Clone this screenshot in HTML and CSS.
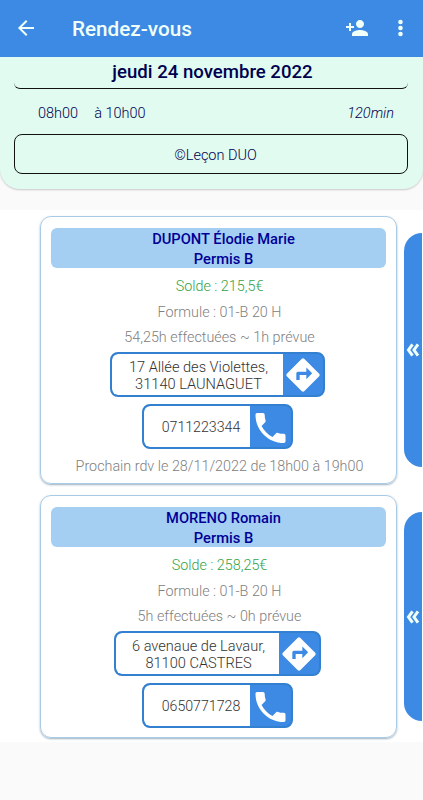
FILE: index.html
```html
<!DOCTYPE html>
<html lang="fr">

<head>
    <meta charset="UTF-8">
    <meta name="viewport" content="width=device-width, initial-scale=1.0">
    <title>Rendez-vous</title>
    <link rel="stylesheet" href="styles.css">
</head>

<body>
    <header class="topbar">
        <svg class="back" viewBox="0 0 24 24"><path d="M20 11H7.83l5.59-5.59L12 4l-8 8 8 8 1.41-1.41L7.83 13H20z"/></svg>
        <h1>Rendez-vous</h1>
        <svg class="add" viewBox="0 0 24 24"><path d="M15 12c2.21 0 4-1.79 4-4s-1.79-4-4-4-4 1.79-4 4 1.79 4 4 4zm-9-2V7H4v3H1v2h3v3h2v-3h3v-2zm9 4c-2.67 0-8 1.34-8 4v2h16v-2c0-2.66-5.33-4-8-4z"/></svg>
        <svg class="more" viewBox="0 0 24 24"><circle cx="12.5" cy="6" r="2.3"/><circle cx="12.5" cy="12" r="2.3"/><circle cx="12.5" cy="18" r="2.3"/></svg>
    </header>

    <!-- résumé du rendez-vous -->
    <section class="summary">
        <div class="date">jeudi 24 novembre 2022</div>
        <div class="hours">
            <span class="start">08h00</span>
            <span>à 10h00</span>
            <span class="duration">120min</span>
        </div>
        <div class="lesson">©Leçon DUO</div>
    </section>

    <!-- élèves -->
    <main class="students">
        <div class="row">
            <article class="card">
                <h2>DUPONT Élodie Marie<br>Permis B</h2>
                <p class="solde">Solde : 215,5€</p>
                <p>Formule : 01-B 20 H</p>
                <p>54,25h effectuées ~ 1h prévue</p>
                <div class="action address">
                    <span>17 Allée des Violettes,<br>31140 LAUNAGUET</span>
                    <svg viewBox="0 0 24 24"><path d="M21.71 11.29l-9-9a1 1 0 0 0-1.41 0l-9 9a1 1 0 0 0 0 1.41l9 9c.39.39 1.02.39 1.41 0l9-9a1 1 0 0 0 0-1.41zM14 14.5V12h-4v3H8v-4c0-.55.45-1 1-1h5V7.5l3.5 3.5-3.5 3.5z"/></svg>
                </div>
                <div class="action phone">
                    <span>0711223344</span>
                    <svg viewBox="0 0 24 24"><path d="M6.62 10.79c1.44 2.83 3.76 5.14 6.59 6.59l2.2-2.2c.27-.27.67-.36 1.02-.24 1.12.37 2.33.57 3.57.57.55 0 1 .45 1 1V20c0 .55-.45 1-1 1-9.39 0-17-7.61-17-17 0-.55.45-1 1-1h3.5c.55 0 1 .45 1 1 0 1.25.2 2.45.57 3.57.11.35.03.74-.25 1.02z"/></svg>
                </div>
                <p class="next">Prochain rdv le 28/11/2022 de 18h00 à 19h00</p>
            </article>
            <div class="tab">
                <svg viewBox="0 0 14 14"><path d="M6.5 1.3L2.5 7l4 5.7M12 1.3L8 7l4 5.7"/></svg>
            </div>
        </div>

        <div class="row">
            <article class="card">
                <h2>MORENO Romain<br>Permis B</h2>
                <p class="solde">Solde : 258,25€</p>
                <p>Formule : 01-B 20 H</p>
                <p>5h effectuées ~ 0h prévue</p>
                <div class="action address short">
                    <span>6 avenaue de Lavaur,<br>81100 CASTRES</span>
                    <svg viewBox="0 0 24 24"><path d="M21.71 11.29l-9-9a1 1 0 0 0-1.41 0l-9 9a1 1 0 0 0 0 1.41l9 9c.39.39 1.02.39 1.41 0l9-9a1 1 0 0 0 0-1.41zM14 14.5V12h-4v3H8v-4c0-.55.45-1 1-1h5V7.5l3.5 3.5-3.5 3.5z"/></svg>
                </div>
                <div class="action phone">
                    <span>0650771728</span>
                    <svg viewBox="0 0 24 24"><path d="M6.62 10.79c1.44 2.83 3.76 5.14 6.59 6.59l2.2-2.2c.27-.27.67-.36 1.02-.24 1.12.37 2.33.57 3.57.57.55 0 1 .45 1 1V20c0 .55-.45 1-1 1-9.39 0-17-7.61-17-17 0-.55.45-1 1-1h3.5c.55 0 1 .45 1 1 0 1.25.2 2.45.57 3.57.11.35.03.74-.25 1.02z"/></svg>
                </div>
            </article>
            <div class="tab">
                <svg viewBox="0 0 14 14"><path d="M6.5 1.3L2.5 7l4 5.7M12 1.3L8 7l4 5.7"/></svg>
            </div>
        </div>
    </main>
</body>

</html>
```
FILE: styles.css
```css
* {
    box-sizing: border-box;
}

body {
    margin: 0;
    font-family: Roboto, sans-serif;
    font-size: 14.5px;
    font-weight: 300;
    background-color: #fafafa;
}

h1,
h2,
p {
    margin: 0;
}

.topbar {
    display: flex;
    align-items: center;
    height: 57px;
    padding: 0 11px 1px 14px;
    background-color: #3d8ae4;
    color: #f0fff8;
    fill: #f0fff8;
}

.topbar svg {
    width: 24px;
    height: 24px;
}

.topbar h1 {
    margin-left: 34px;
    font-size: 20.7px;
    font-weight: 500;
    line-height: 28px;
    padding-top: 2px;
}

.topbar .add {
    margin-left: auto;
    margin-right: 19px;
}

.summary {
    height: 132px;
    padding: 0 15px 0 14px;
    background-color: #e1fbf0;
    border-radius: 0 0 20px 20px;
    box-shadow: 0 1px 2px rgba(0, 0, 0, 0.2);
    color: #000050;
}

.date {
    height: 32px;
    border-bottom: 1px solid #111;
    border-radius: 0 0 6px 6px;
    font-size: 18.6px;
    font-weight: 500;
    line-height: 30px;
    text-align: center;
    padding-left: 3px;
}

.hours {
    display: flex;
    gap: 16px;
    padding: 0 14px 0 24px;
    height: 45px;
    line-height: 49px;
}

.duration {
    margin-left: auto;
    font-style: italic;
}

.lesson {
    height: 40px;
    border: 1px solid #111;
    border-radius: 8px;
    line-height: 42px;
    text-align: center;
    padding-left: 9px;
}

.students {
    display: flex;
    flex-direction: column;
    gap: 11px;
    margin-top: 21px;
    padding: 6px 1px 4px 40px;
    background-color: #fff;
}

.row {
    display: flex;
    gap: 7px;
}

.card {
    display: flex;
    flex-direction: column;
    align-items: center;
    width: 357px;
    height: 268px;
    padding: 11px 10px 0;
    border: 1px solid #a9cbe6;
    border-radius: 11px;
    box-shadow: 0 1px 2px rgba(40, 80, 110, 0.45);
    color: #808080;
    font-size: 14.35px;
}

.row:last-child .card {
    height: 243px;
}

.card h2 {
    align-self: stretch;
    margin-bottom: 6px;
    padding: 1px 0 0 10px;
    height: 40px;
    background-color: #a5cff2;
    border-radius: 6px;
    color: #000096;
    font-size: 14.7px;
    font-weight: 500;
    line-height: 20px;
    text-align: center;
}

.card p {
    padding-left: 2px;
    line-height: 25.6px;
}

.card .solde {
    color: #35a346;
}

.action {
    display: flex;
    height: 45px;
    margin-top: 1px;
    margin-right: 2px;
    border: 2px solid #3380d0;
    border-radius: 8px;
    background-color: #3d8ae4;
    color: #333;
    fill: #fff;
    font-size: 14.6px;
    overflow: hidden;
    flex-shrink: 0;
}

.action span {
    display: flex;
    align-items: center;
    justify-content: center;
    background-color: #fff;
    border-radius: 6px 0 0 6px;
    line-height: 17px;
    text-align: center;
}

.action svg {
    width: 40px;
    height: 40px;
    margin-top: 1px;
}

.address {
    width: 215px;
}

.address.short {
    width: 207px;
}

.address span {
    flex: 1;
    padding-top: 3px;
    padding-left: 2px;
}

.phone {
    width: 151px;
    margin-top: 7px;
}

.phone span {
    flex: 1;
    padding-top: 3px;
    padding-left: 8px;
    font-size: 14.2px;
}

.phone svg {
    width: 41px;
    margin-top: 2px;
}

.card .next {
    margin-top: 5px;
}

.tab {
    display: flex;
    align-items: center;
    justify-content: center;
    width: 18px;
    margin: 17px 0 17px;
    background-color: #3d8ae4;
    border-radius: 18px 0 0 18px;
}

.tab svg {
    width: 14px;
    height: 14px;
    fill: none;
    stroke: #f0fff8;
    stroke-width: 3;
}
```
